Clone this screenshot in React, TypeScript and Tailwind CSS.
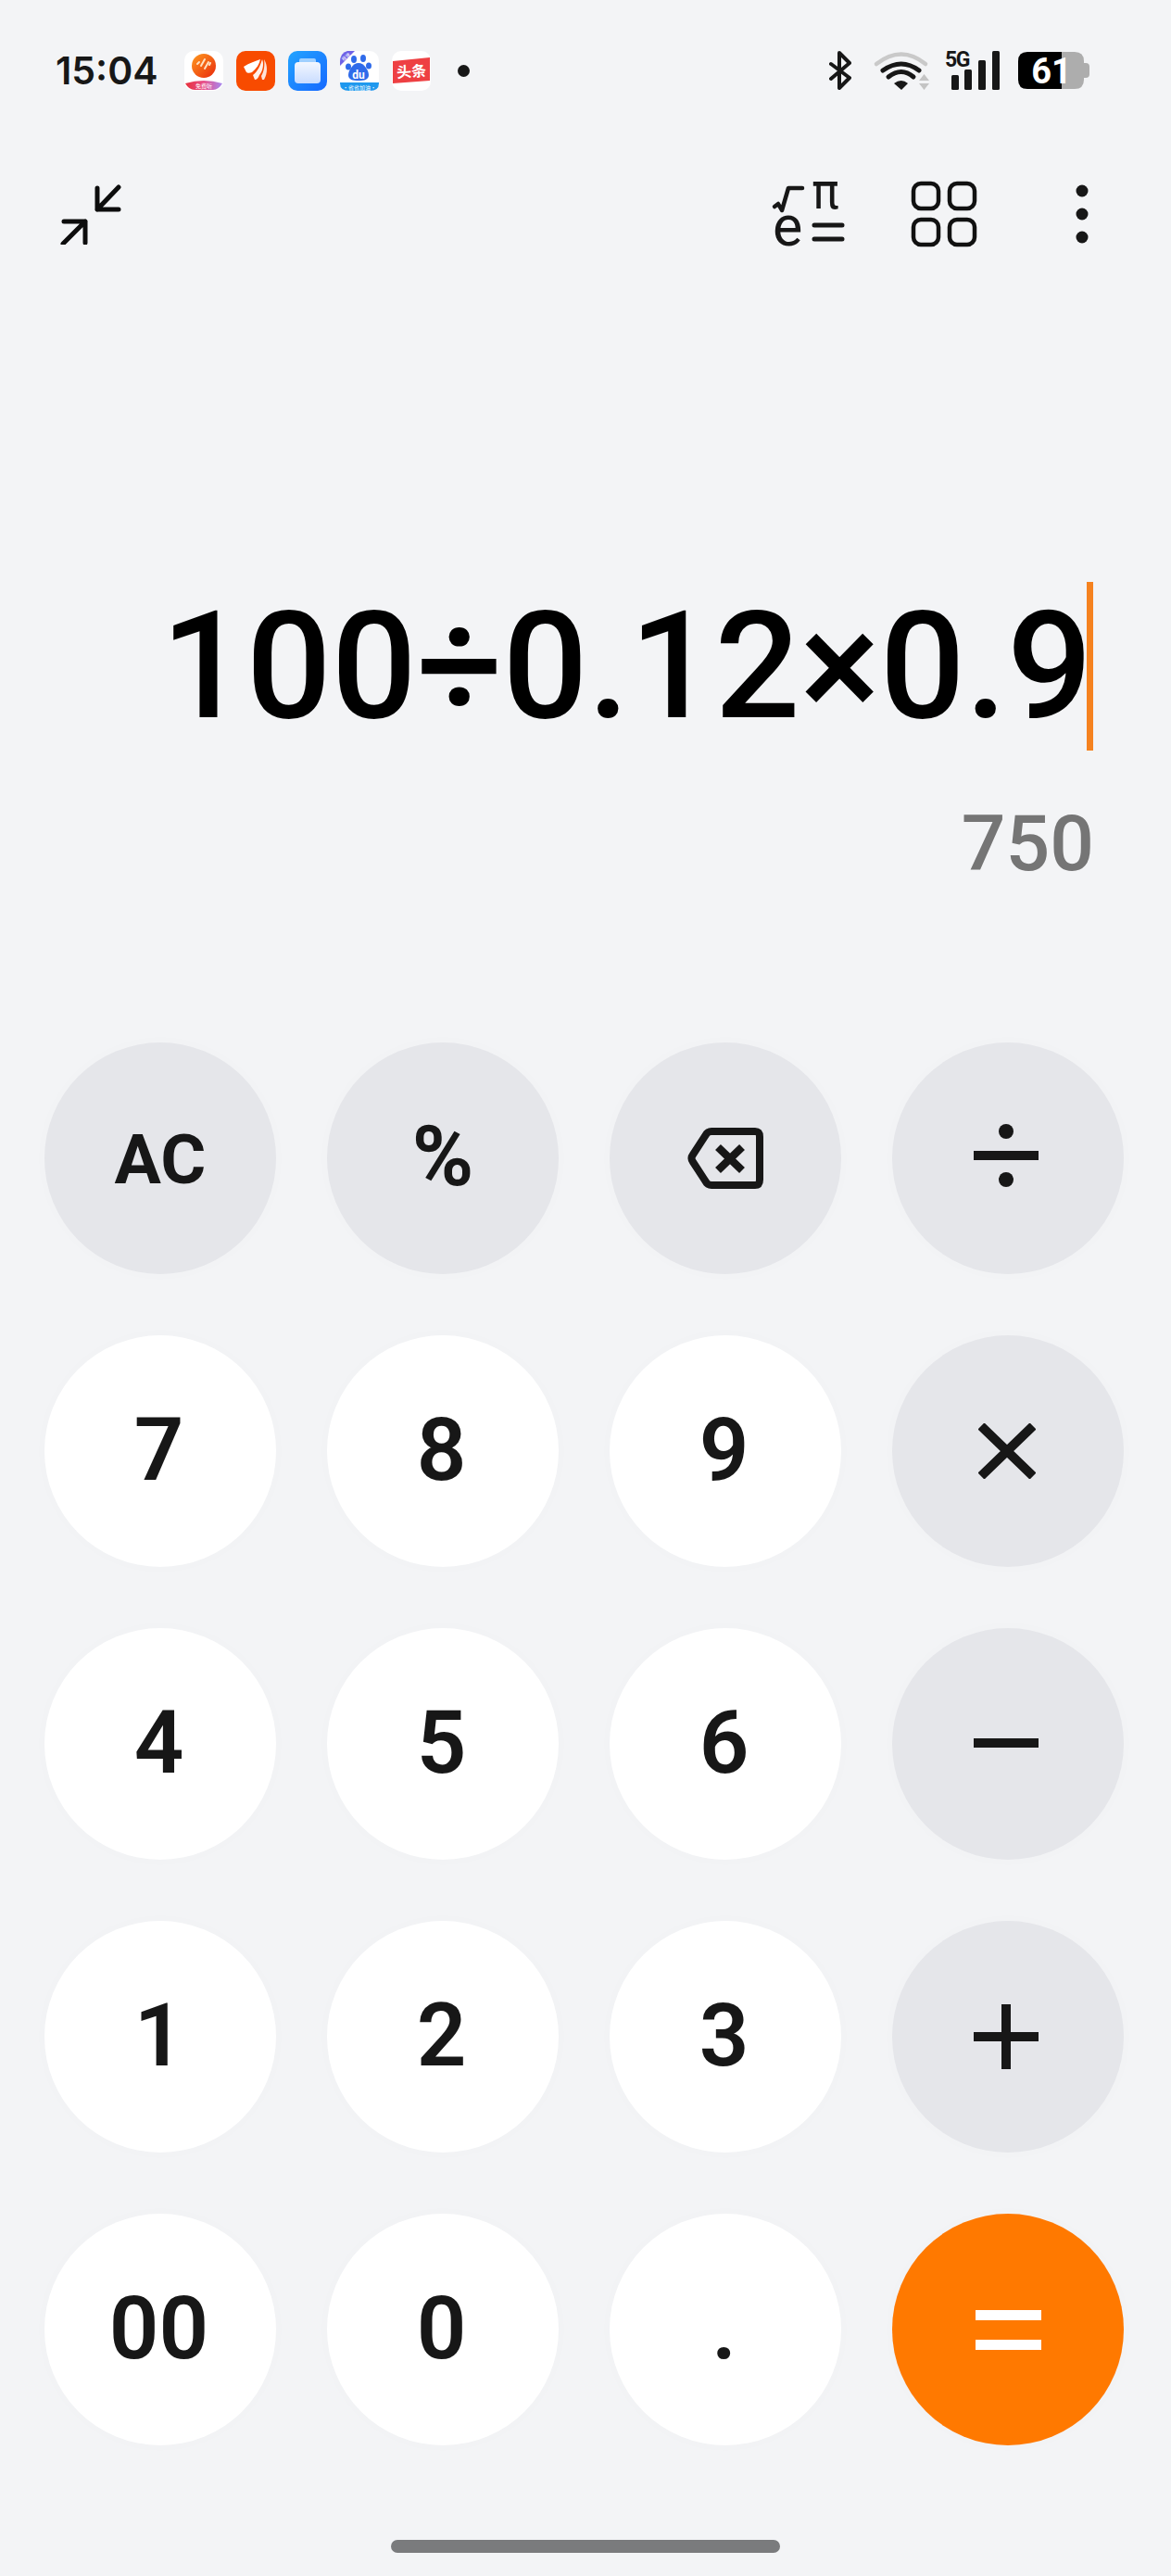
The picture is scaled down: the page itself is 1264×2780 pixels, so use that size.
import React from "react";

const INK = "#171717";

function AppA() {
  return (
    <svg width="42" height="43" viewBox="0 0 42 43">
      <defs>
        <linearGradient id="a1" x1="0" y1="0" x2="1" y2="1"><stop offset="0" stopColor="#ff9a1f" /><stop offset="1" stopColor="#e8280c" /></linearGradient>
        <linearGradient id="a2" x1="0" y1="0" x2="1" y2="0"><stop offset="0" stopColor="#e6303a" /><stop offset="0.5" stopColor="#e8508a" /><stop offset="1" stopColor="#a78af0" /></linearGradient>
      </defs>
      <rect width="42" height="43" rx="10" fill="#fff" />
      <circle cx="21" cy="16" r="13" fill="url(#a1)" />
      <path d="M14 14l2-2M18 16l4-7M22 19l4-7M27 15l1-2" stroke="#ffe2c4" strokeWidth="2" strokeLinecap="round" />
      <path d="M1 35 Q21 29 41 35 Q37 42 31 42 H11 Q5 42 1 35Z" fill="url(#a2)" />
      <text x="21" y="40" textAnchor="middle" fontSize="6" fill="#fff" fontFamily="'Noto Sans CJK SC',sans-serif">免费听</text>
    </svg>
  );
}

function AppB() {
  return (
    <svg width="42" height="43" viewBox="0 0 42 43">
      <rect width="42" height="43" rx="10" fill="#f84b00" />
      <path d="M8 17 C14 13 21 11 26 9 C25 14 22 19 17 23 C15 24 12 24 11 23Z" fill="#fff" />
      <path d="M18 26 C23 22 26 16 28 9 C30 14 29 21 25 26 C24 29 22 31 20 31Z" fill="#fff" opacity="0.92" />
      <path d="M27 27 C30 22 31 15 30 9 C34 15 34 24 30 31 L28 31Z" fill="#fff" opacity="0.85" />
    </svg>
  );
}

function AppC() {
  return (
    <svg width="42" height="43" viewBox="0 0 42 43">
      <defs>
        <linearGradient id="c1" x1="0" y1="0" x2="1" y2="1"><stop offset="0" stopColor="#22a4ff" /><stop offset="1" stopColor="#1668ff" /></linearGradient>
        <linearGradient id="c2" x1="0" y1="0" x2="0" y2="1"><stop offset="0" stopColor="#f2f7ff" /><stop offset="1" stopColor="#c9dcff" /></linearGradient>
      </defs>
      <rect width="42" height="43" rx="10" fill="url(#c1)" />
      <rect x="12" y="8" width="18" height="6" rx="2" fill="#9fd0ff" />
      <rect x="7" y="12" width="28" height="23" rx="4" fill="url(#c2)" />
    </svg>
  );
}

function AppD() {
  return (
    <svg width="42" height="43" viewBox="0 0 42 43">
      <rect width="42" height="43" rx="10" fill="#fff" />
      <g fill="#2f6bea">
        <ellipse cx="15" cy="9" rx="3" ry="4" />
        <ellipse cx="25" cy="8" rx="3" ry="4" />
        <ellipse cx="9" cy="17" rx="3" ry="3.5" />
        <ellipse cx="31" cy="16" rx="3" ry="3.5" />
        <path d="M20 13 C26 13 31 21 31 26 C31 31 26 32 20 32 C14 32 9 31 9 26 C9 21 14 13 20 13Z" />
      </g>
      <text x="20" y="30" textAnchor="middle" fontSize="12" fontWeight="700" fill="#fff" fontFamily="Roboto,sans-serif">du</text>
      <path d="M0 34 H42 V35 Q42 43 32 43 H10 Q0 43 0 35Z" fill="#1e98ee" />
      <text x="21" y="41.5" textAnchor="middle" fontSize="6" fill="#fff" fontFamily="'Noto Sans CJK SC',sans-serif">·省省加油·</text>
      <path d="M0 12 Q0 2 8 0 H16 L0 16Z" fill="#6f62e6" />
      <text x="7" y="8" textAnchor="middle" fontSize="5" fill="#fff" transform="rotate(-40 7 7)" fontFamily="'Noto Sans CJK SC',sans-serif">极速</text>
    </svg>
  );
}

function AppE() {
  return (
    <svg width="42" height="43" viewBox="0 0 42 43">
      <rect width="42" height="43" rx="10" fill="#fff" />
      <path d="M1 11 L41 7 V32 L1 35Z" fill="#ee4043" />
      <text x="21" y="28" textAnchor="middle" fontSize="16" fontWeight="700" fill="#fff" transform="rotate(-4 21 21)" fontFamily="'Noto Sans CJK SC',sans-serif">头条</text>
    </svg>
  );
}

function Bluetooth() {
  return (
    <svg width="24" height="42" viewBox="0 0 24 42" fill="none" stroke={INK} strokeWidth="4" strokeLinejoin="round" strokeLinecap="round">
      <path d="M2 14 L22 29 L11 40 V2 L22 13 L2 30" />
    </svg>
  );
}

function Wifi() {
  return (
    <svg width="58" height="42" viewBox="0 0 58 42" fill="none" strokeLinecap="round" className="overflow-visible">
      <path d="M2 14 Q29 -7 55 14" stroke="#c9c9c9" strokeWidth="4.5" />
      <path d="M9 21 Q29 7 48 21" stroke={INK} strokeWidth="5" />
      <path d="M15 28 Q29 17 42 28" stroke={INK} strokeWidth="5" />
      <path d="M21 35 Q29 29 36 35 L29 42Z" fill={INK} />
      <path d="M48 32 L53.5 25 L59 32Z M48 35 H59 L53.5 42Z" fill="#c4c4c4" />
    </svg>
  );
}

function Signal() {
  return (
    <svg width="59" height="42" viewBox="0 0 59 42" className="overflow-visible">
      <text x="0" y="17" fontSize="23" fontWeight="700" letterSpacing="-1.5" fill={INK} fontFamily="Roboto,sans-serif">5G</text>
      <rect x="7" y="26" width="8" height="16" rx="1.5" fill={INK} />
      <rect x="21" y="20" width="8" height="22" rx="1.5" fill={INK} />
      <rect x="36" y="10" width="8" height="32" rx="1.5" fill={INK} />
      <rect x="51" y="0" width="8" height="42" rx="1.5" fill={INK} />
    </svg>
  );
}

function Battery() {
  return (
    <svg width="77" height="40" viewBox="0 0 77 40" className="overflow-visible">
      <path d="M47 0 H61 Q71 0 71 10 V30 Q71 40 61 40 H47Z" fill="#adadad" />
      <path d="M70 12 H73 Q77 12 77 16 V24 Q77 28 73 28 H70Z" fill="#adadad" />
      <path d="M47 0 H10 Q0 0 0 10 V30 Q0 40 10 40 H47Z" fill="#000" />
      <text x="36" y="34" textAnchor="middle" fontSize="38" fontWeight="700" fill="#fff" fontFamily="Roboto,sans-serif">61</text>
    </svg>
  );
}

function Collapse() {
  return (
    <svg width="66" height="66" viewBox="0 0 66 66" fill="none" stroke="#0d0d0d" strokeWidth="5" strokeLinecap="round" strokeLinejoin="round">
      <path d="M40 5 V28 H63 M63 4 L40 28" />
      <path d="M4 41 H27 V64 M27 41 L3 65" />
    </svg>
  );
}

function Sci() {
  return (
    <svg width="82" height="76" viewBox="0 0 82 76" fill="none" className="overflow-visible">
      <path d="M3 30 L7 27 L11 34 L18 10 H33" stroke={INK} strokeWidth="4.5" strokeLinecap="round" strokeLinejoin="round" />
      <text x="43" y="32" fontSize="54" fill={INK} fontFamily="'DejaVu Sans',sans-serif" textLength="30" lengthAdjust="spacingAndGlyphs">π</text>
      <text x="1" y="72" fontSize="61" fill={INK} fontFamily="Roboto,sans-serif">e</text>
      <path d="M46 50 H76 M46 65 H76" stroke={INK} strokeWidth="5" strokeLinecap="round" />
    </svg>
  );
}

function Grid4() {
  return (
    <svg width="72" height="72" viewBox="0 0 72 72" fill="none" stroke="#111" strokeWidth="4.5">
      <rect x="3" y="3" width="27" height="27" rx="8" />
      <rect x="42" y="3" width="27" height="27" rx="8" />
      <rect x="3" y="42" width="27" height="27" rx="8" />
      <rect x="42" y="42" width="27" height="27" rx="8" />
    </svg>
  );
}

function Dots() {
  return (
    <svg width="14" height="64" viewBox="0 0 14 64" fill={INK}>
      <circle cx="7" cy="7" r="6.5" />
      <circle cx="7" cy="32" r="6.5" />
      <circle cx="7" cy="57" r="6.5" />
    </svg>
  );
}

function Backspace() {
  return (
    <svg width="82" height="66" viewBox="0 0 82 66" fill="none" stroke={INK}>
      <path d="M26 4 H73 Q78 4 78 10 V56 Q78 62 73 62 H26 Q23 62 21 60 L6 37 Q3 33 6 29 L21 6 Q23 4 26 4Z" strokeWidth="8" strokeLinejoin="round" />
      <path d="M33 21 L59 46 M59 21 L33 46" strokeWidth="8.5" />
    </svg>
  );
}

function Divide() {
  return (
    <svg width="70" height="68" viewBox="0 0 70 68" fill={INK} className="mr-[4px] mb-[6px]">
      <circle cx="35" cy="8" r="8" />
      <rect x="0" y="29" width="70" height="10" />
      <circle cx="35" cy="60" r="8" />
    </svg>
  );
}

function Times() {
  return (
    <svg width="62" height="60" viewBox="0 0 62 60" fill="none" stroke={INK} strokeWidth="10" className="mr-[2px]">
      <path d="M3 3 L59 57 M59 3 L3 57" />
    </svg>
  );
}

function Minus() {
  return (
    <svg width="70" height="10" viewBox="0 0 70 10" fill={INK} className="mr-[4px] mb-[2px]">
      <rect width="70" height="10" />
    </svg>
  );
}

function Plus() {
  return (
    <svg width="70" height="70" viewBox="0 0 70 70" fill={INK} className="mr-[4px]">
      <rect y="30" width="70" height="10" />
      <rect x="30" width="10" height="70" />
    </svg>
  );
}

function EqualsIcon() {
  return (
    <svg width="71" height="43" viewBox="0 0 71 43" fill="#fff">
      <rect width="71" height="11" />
      <rect y="32" width="71" height="11" />
    </svg>
  );
}

type Key = { label?: string; icon?: React.ReactNode; kind: "op" | "num" | "eq"; text?: string; pad?: string };

const keys: Key[] = [
  { label: "AC", kind: "op", text: "text-[75px] font-bold", pad: "pt-[3px]" },
  { label: "%", kind: "op", text: "text-[90px] font-bold", pad: "pb-[2px]" },
  { icon: <Backspace />, kind: "op" },
  { icon: <Divide />, kind: "op" },
  { label: "7", kind: "num" },
  { label: "8", kind: "num" },
  { label: "9", kind: "num" },
  { icon: <Times />, kind: "op" },
  { label: "4", kind: "num" },
  { label: "5", kind: "num" },
  { label: "6", kind: "num" },
  { icon: <Minus />, kind: "op" },
  { label: "1", kind: "num" },
  { label: "2", kind: "num" },
  { label: "3", kind: "num" },
  { icon: <Plus />, kind: "op" },
  { label: "00", kind: "num" },
  { label: "0", kind: "num" },
  { label: ".", kind: "num" },
  { icon: <EqualsIcon />, kind: "eq" },
];

function KeyButton({ k }: { k: Key }) {
  const bg =
    k.kind === "eq"
      ? "bg-[#ff7900]"
      : k.kind === "op"
        ? "bg-[#e5e6ea]"
        : "bg-white";
  return (
    <div
      className={`flex h-[250px] w-[250px] items-center justify-center rounded-full shadow-[0_0_30px_rgba(0,0,0,0.012)] ${bg} ${
        k.text ?? "text-[94px] font-semibold"
      } text-[#171717]`}
    >
      {k.icon ?? <span className={`leading-none ${k.pad ?? "pb-[2px] pr-[3px]"}`}>{k.label}</span>}
    </div>
  );
}

export default function App() {
  return (
    <div className="flex h-[2780px] w-[1264px] flex-col overflow-hidden bg-[#f3f4f6] font-['Roboto',sans-serif]">
      <div className="flex h-[152px] items-center justify-between pl-[60px] pr-[88px]">
        <div className="flex items-center">
          <span className="w-[139px] font-['Inter',sans-serif] text-[41px] font-semibold leading-none text-[#171717]">15:04</span>
          <div className="flex items-center gap-[14px]">
            <AppA />
            <AppB />
            <AppC />
            <AppD />
            <AppE />
          </div>
          <div className="ml-[29px] h-[13px] w-[13px] rounded-full bg-[#171717]" />
        </div>
        <div className="flex items-center">
          <div className="mr-[-1px] translate-x-[1px]"><Bluetooth /></div>
          <div className="ml-[27px]"><Wifi /></div>
          <div className="ml-[18px]"><Signal /></div>
          <div className="ml-[20px]"><Battery /></div>
        </div>
      </div>

      <div className="flex h-[158px] items-center justify-between pl-[65px] pr-[89px]">
        <Collapse />
        <div className="flex items-center">
          <Sci />
          <div className="ml-[68px]"><Grid4 /></div>
          <div className="ml-[106px]"><Dots /></div>
        </div>
      </div>

      <div className="mt-[318px] flex items-center justify-end pr-[84px]">
        <span className="text-[162px] font-medium leading-none text-black">100÷0.12×0.9</span>
        <div className="ml-[-6px] h-[182px] w-[7px] bg-[#f5821f]" />
      </div>

      <div className="mt-[59px] flex justify-end pr-[83px]">
        <span className="text-[84px] font-medium leading-none text-[#757575]">750</span>
      </div>

      <div className="mt-[172px] grid grid-cols-[repeat(4,250px)] gap-x-[55px] gap-y-[66px] pl-[48px]">
        {keys.map((k, i) => (
          <KeyButton key={i} k={k} />
        ))}
      </div>

      <div className="mt-[102px] flex justify-center">
        <div className="h-[14px] w-[420px] rounded-full bg-[#7a7b7d]" />
      </div>
    </div>
  );
}
